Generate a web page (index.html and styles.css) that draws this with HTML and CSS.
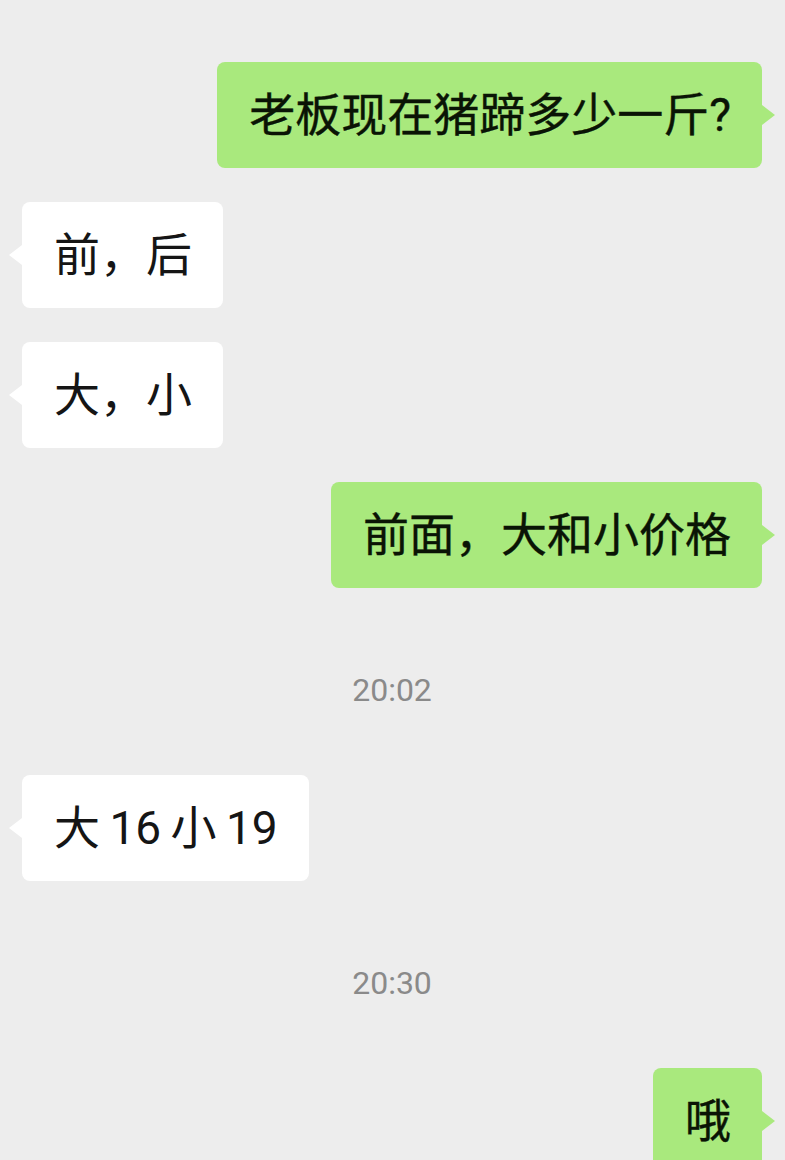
FILE: index.html
```html
<!DOCTYPE html>
<html>
	<head>
		<meta charset="UTF-8">
		<meta name="viewport" content="width=device-width,initial-scale=1" />
		<title>聊天记录</title>
		<link rel="stylesheet" href="styles.css">
	</head>
	<body>
		<div id="chat">
			<div class="row mine">
				<div class="bubble">老板现在猪蹄多少一斤?</div>
			</div>
			<div class="row other">
				<div class="bubble">前，后</div>
			</div>
			<div class="row other">
				<div class="bubble">大，小</div>
			</div>
			<div class="row mine">
				<div class="bubble">前面，大和小价格</div>
			</div>

			<div class="time">20:02</div>

			<div class="row other">
				<div class="bubble">大 16 小 19</div>
			</div>

			<div class="time">20:30</div>

			<div class="row mine">
				<div class="bubble">哦</div>
			</div>
		</div>
	</body>
</html>
```

FILE: styles.css
```css
*{
	margin:0; padding:0;
	box-sizing: border-box;
}

html,body{
	height:100%;
	overflow: hidden;
	background:#EDEDED;
}

body{
	font-family: Roboto, "Noto Sans CJK SC", sans-serif;
}

#chat{
	display: flex;
	flex-direction: column;
	gap:34px;
	padding:62px 23px 0 22px;
}

.row{
	display: flex;
}

.row.mine{
	justify-content: flex-end;
}

.bubble{
	position: relative;
	padding:30px 31px 30px 32px;
	font-size:46px;
	line-height:46px;
	word-spacing:-2px;
	border-radius:8px;
	color:#151515;
	background:#fff;
}

/* 小尖角 */
.bubble::after{
	content:'';
	position: absolute;
	top:43px;
	width:0; height:0;
	border-top:10px solid transparent;
	border-bottom:10px solid transparent;
}

.other .bubble::after{
	left:-13px;
	border-right:13px solid #fff;
}

.mine .bubble{
	background:#A9E97D;
	color:#0a1405;
	-webkit-text-stroke:0.4px #0a1405;
}

.mine .bubble::after{
	right:-13px;
	border-left:13px solid #A9E97D;
}

.time{
	text-align: center;
	font-size:32px;
	line-height:40px;
	color:#8a8a8a;
	margin:48px 0 31px;
}
```
